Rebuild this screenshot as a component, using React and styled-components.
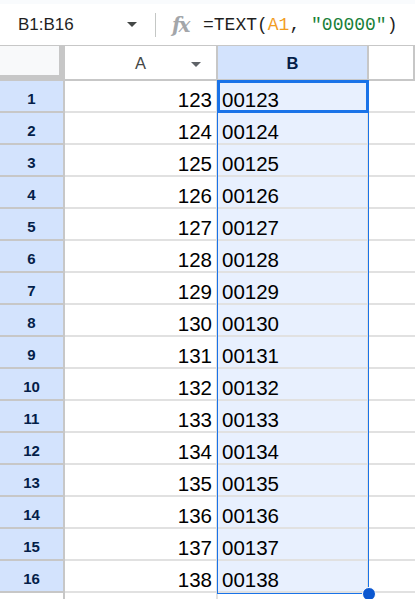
import React from "react";
import styled, { createGlobalStyle, css } from "styled-components";

const GlobalStyle = createGlobalStyle`
  html, body {
    margin: 0;
    padding: 0;
    background: #ffffff;
  }
  body {
    font-family: "Liberation Sans", Arial, sans-serif;
    overflow: hidden;
  }
  * {
    box-sizing: border-box;
  }
`;

const Page = styled.div`
  width: 415px;
  height: 599px;
  overflow: hidden;
  background: #ffffff;
`;

const TopStrip = styled.div`
  height: 4px;
  background: #f9fbfd;
`;

const FormulaBar = styled.div`
  height: 42px;
  display: flex;
  align-items: center;
  border-bottom: 1px solid #c7c7c7;
  background: #ffffff;
`;

const NameBox = styled.div`
  width: 146px;
  display: flex;
  align-items: center;
  justify-content: space-between;
  padding: 0 9px 0 18px;
  font-size: 17px;
  font-weight: 400;
  color: #1f1f1f;
`;

const Caret = styled.span`
  width: 0;
  height: 0;
  border-left: ${(p) => p.$w / 2}px solid transparent;
  border-right: ${(p) => p.$w / 2}px solid transparent;
  border-top: ${(p) => p.$h}px solid ${(p) => p.$color || "#444746"};
`;

const Divider = styled.div`
  width: 1px;
  height: 24px;
  margin-left: 9px;
  background: #c4c7c5;
`;

const Fx = styled.span`
  margin-left: 16px;
  width: 23px;
  font-family: "DejaVu Serif", "Liberation Serif", serif;
  font-style: italic;
  font-weight: 700;
  font-size: 20px;
  color: #a3a6aa;
  letter-spacing: -2px;
`;

const Formula = styled.div`
  margin-left: 8px;
  font-family: "Liberation Mono", "DejaVu Sans Mono", monospace;
  font-size: 18px;
  color: #1f1f1f;
  white-space: pre;
`;

const Ref = styled.span`
  color: #f29d1f;
`;

const Str = styled.span`
  color: #188038;
`;

const Sheet = styled.div`
  position: relative;
  display: grid;
  grid-template-columns: 65px 153px 151px 1fr;
  grid-template-rows: 35px repeat(17, 32px);
`;

const Corner = styled.div`
  background: #f8f9fa;
  border-right: 6px solid #c7c7c7;
  border-bottom: 6px solid #c7c7c7;
`;

const ColHeader = styled.div`
  position: relative;
  display: flex;
  align-items: center;
  justify-content: center;
  border-right: 2px solid #c7c7c7;
  border-bottom: 2px solid #c7c7c7;
  font-size: 16.5px;
  padding-top: 1px;
  background: ${(p) => (p.$active ? "#d3e3fd" : "#ffffff")};
  color: ${(p) => (p.$active ? "#041e49" : "#444746")};
  font-weight: ${(p) => (p.$active ? 700 : 400)};
`;

const HeaderMenu = styled.span`
  position: absolute;
  right: 15px;
  top: 16px;
  display: flex;
`;

const RowHeader = styled.div`
  display: flex;
  align-items: center;
  justify-content: center;
  padding-top: 4px;
  border-right: 2px solid #c7c7c7;
  border-bottom: 2px solid #c7c7c7;
  font-size: 15px;
  font-weight: 700;
  color: #041e49;
  background: ${(p) => (p.$active ? "#d3e3fd" : "#ffffff")};
`;

const Cell = styled.div`
  display: flex;
  align-items: flex-end;
  padding-bottom: 1px;
  border-bottom: 2px solid #e1e1e1;
  font-size: 20.5px;
  line-height: 20.5px;
  color: #000000;
  white-space: nowrap;
  overflow: hidden;
  ${(p) =>
    p.$align === "right"
      ? css`
          justify-content: flex-end;
          padding-right: 4px;
        `
      : css`
          justify-content: flex-start;
          padding-left: 4px;
        `}
  border-right: ${(p) => (p.$last ? "none" : "2px solid #e1e1e1")};
  background: ${(p) => (p.$selected ? "#e8f0fe" : "#ffffff")};
`;

const RangeBox = styled.div`
  position: absolute;
  left: 217px;
  top: 34px;
  width: 152px;
  height: 514px;
  border: 1px solid #1a73e8;
  pointer-events: none;
`;

const ActiveBox = styled.div`
  position: absolute;
  left: 217px;
  top: 34px;
  width: 152px;
  height: 33px;
  border: 3px solid #1a73e8;
  pointer-events: none;
`;

const FillHandle = styled.div`
  position: absolute;
  left: 362px;
  top: 541px;
  width: 14px;
  height: 14px;
  border-radius: 50%;
  background: #0b57d0;
  border: 1px solid #ffffff;
`;

const rows = Array.from({ length: 17 }, (_, i) => i + 1);

export default function App() {
  return (
    <Page>
      <GlobalStyle />
      <TopStrip />
      <FormulaBar>
        <NameBox>
          <span>B1:B16</span>
          <Caret $w={11} $h={5} />
        </NameBox>
        <Divider />
        <Fx>fx</Fx>
        <Formula>
          =TEXT(<Ref>A1</Ref>, <Str>"00000"</Str>)
        </Formula>
      </FormulaBar>
      <Sheet>
        <Corner />
        <ColHeader>
          A
          <HeaderMenu>
            <Caret $w={10} $h={5} $color="#5f6368" />
          </HeaderMenu>
        </ColHeader>
        <ColHeader $active>B</ColHeader>
        <ColHeader />
        {rows.map((r) => {
          const filled = r <= 16;
          return (
            <React.Fragment key={r}>
              <RowHeader $active={filled}>{filled ? r : ""}</RowHeader>
              <Cell $align="right">{filled ? 122 + r : ""}</Cell>
              <Cell $selected={filled}>
                {filled ? String(122 + r).padStart(5, "0") : ""}
              </Cell>
              <Cell $last />
            </React.Fragment>
          );
        })}
        <RangeBox />
        <ActiveBox />
        <FillHandle />
      </Sheet>
    </Page>
  );
}
